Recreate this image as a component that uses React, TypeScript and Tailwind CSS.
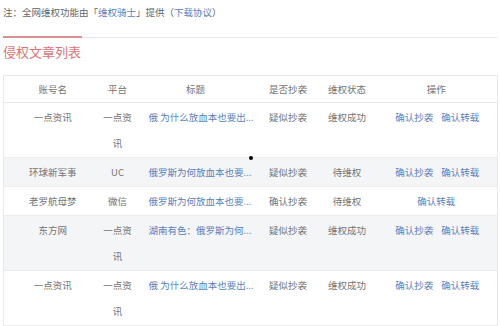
const rows = [
  { name: "一点资讯", platform: "一点资讯", title: "俄 为什么放血本也要出...", copy: "疑似抄袭", status: "维权成功", actions: 2, stripe: false },
  { name: "环球新军事", platform: "UC", title: "俄罗斯为何放血本也要...", copy: "疑似抄袭", status: "待维权", actions: 2, stripe: true },
  { name: "老罗航母梦", platform: "微信", title: "俄罗斯为何放血本也要...", copy: "确认抄袭", status: "待维权", actions: 1, stripe: false },
  { name: "东方网", platform: "一点资讯", title: "湖南有色：俄罗斯为何...", copy: "疑似抄袭", status: "维权成功", actions: 2, stripe: true },
  { name: "一点资讯", platform: "一点资讯", title: "俄 为什么放血本也要出...", copy: "疑似抄袭", status: "维权成功", actions: 2, stripe: false },
];

const headers = ["账号名", "平台", "标题", "是否抄袭", "维权状态", "操作"];

export default function App() {
  return (
    <div
      className="relative w-[500px] h-[326px] overflow-hidden bg-white px-[3px] text-[9.5px] text-[#747474]"
      style={{ fontFamily: '"Noto Sans CJK SC", "Noto Sans", sans-serif' }}
    >
      {/* notice */}
      <div className="pt-[5px] leading-[14px] text-[#666]">
        注：全网维权功能由「<span className="text-[#5a7fbc]">维权骑士</span>」提供（
        <span className="text-[#5a7fbc]">下载协议</span>）
      </div>

      {/* section title */}
      <div className="mt-[17px] flex items-end">
        <div className="w-[79px] h-[2px] bg-[#dc9090]" />
        <div className="flex-1 h-px bg-[#e6e6e6]" />
      </div>
      <div className="mt-[5px] text-[13px] leading-[18px] text-[#dc7476]">侵权文章列表</div>

      {/* table */}
      <table className="mt-[14px] w-[494px] table-fixed border-collapse border border-[#e8e8e8]">
        <colgroup>
          <col className="w-[98px]" />
          <col className="w-[32px]" />
          <col className="w-[124px]" />
          <col className="w-[61px]" />
          <col className="w-[57px]" />
          <col className="w-[122px]" />
        </colgroup>
        <thead>
          <tr className="border-b border-[#e8e8e8]">
            {headers.map((h) => (
              <th key={h} className="h-[27px] p-0 text-center font-normal text-[#747474]">
                {h}
              </th>
            ))}
          </tr>
        </thead>
        <tbody>
          {rows.map((r, i) => (
            <tr key={i} className={`border-b border-[#ececec] ${r.stripe ? "bg-[#f4f5f7]" : "bg-white"}`}>
              <td className="py-px text-center align-top leading-[26px]">{r.name}</td>
              <td className="py-px text-center align-top leading-[26px] break-all">{r.platform}</td>
              <td className="py-px pl-[15px] align-top leading-[26px] whitespace-nowrap overflow-hidden text-[#5a7fbc]">
                {r.title}
              </td>
              <td className="py-px text-center align-top leading-[26px]">{r.copy}</td>
              <td className="py-px text-center align-top leading-[26px]">{r.status}</td>
              <td className="py-px align-top leading-[26px] text-[#5a7fbc]">
                {r.actions === 2 ? (
                  <div className="flex justify-center gap-[8px] pl-[2px]">
                    <span>确认抄袭</span>
                    <span>确认转载</span>
                  </div>
                ) : (
                  <div className="text-center">确认转载</div>
                )}
              </td>
            </tr>
          ))}
        </tbody>
      </table>

      {/* stray dot */}
      <div className="absolute left-[249px] top-[156px] h-[4px] w-[4px] rounded-full bg-black" />
    </div>
  );
}
